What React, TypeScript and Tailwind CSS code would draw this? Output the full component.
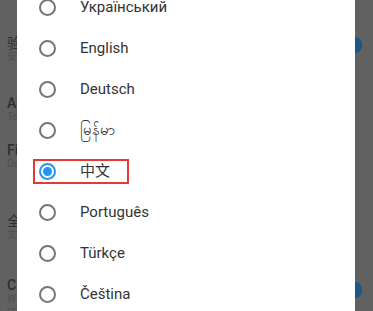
import React from "react";

const languages = [
  "Український",
  "English",
  "Deutsch",
  "မြန်မာ",
  "中文",
  "Português",
  "Türkçe",
  "Čeština",
];

function Radio({ checked }: { checked: boolean }) {
  return (
    <div
      className={`shrink-0 w-[17px] h-[17px] rounded-full border-2 flex items-center justify-center ${
        checked ? "border-[#2196f3]" : "border-[#757575]"
      }`}
    >
      {checked && <div className="w-[9px] h-[9px] rounded-full bg-[#2196f3]" />}
    </div>
  );
}

function BackdropText() {
  return (
    <div className="shrink-0 w-[17px] h-full overflow-hidden pl-[7px] text-[#2e2e2e] whitespace-nowrap">
      <div className="mt-[35px] text-[14px] leading-[16px]">验证</div>
      <div className="text-[10px] leading-[12px] text-[#505050]">安全</div>
      <div className="mt-[32px] text-[14px] leading-[16px] font-medium">App</div>
      <div className="text-[10px] leading-[12px] text-[#505050]">Text</div>
      <div className="mt-[19px] text-[14px] leading-[16px] font-medium">Fi</div>
      <div className="text-[10px] leading-[12px] text-[#505050]">De</div>
      <div className="mt-[43px] text-[14px] leading-[16px]">全部</div>
      <div className="text-[10px] leading-[12px] text-[#505050]">文字</div>
      <div className="mt-[36px] text-[14px] leading-[16px] font-medium">C</div>
      <div className="text-[10px] leading-[12px] text-[#505050]">W</div>
      <div className="text-[10px] leading-[11px] text-[#505050]">cc</div>
    </div>
  );
}

export default function App() {
  return (
    <div
      className="w-[373px] h-[311px] bg-[#616161] flex overflow-hidden"
      style={{ fontFamily: "Roboto, 'Noto Sans', 'Noto Sans CJK SC', sans-serif" }}
    >
      <BackdropText />
      <div className="shrink-0 w-[338px] h-full bg-white overflow-hidden">
        <div className="-mt-[13px] flex flex-col">
          {languages.map((lang, i) => (
            <div key={lang} className="h-[41px] flex items-center pl-[16px]">
              <div
                className={`flex items-center h-[25px] w-[96px] pl-[4px] border-2 whitespace-nowrap ${
                  i === 4 ? "border-[#e53935]" : "border-transparent"
                }`}
              >
                <Radio checked={i === 4} />
                <span className="ml-[24px] text-[15px] text-[#333]">{lang}</span>
              </div>
            </div>
          ))}
        </div>
      </div>
      <div className="flex-1 h-full flex flex-col">
        <div className="mt-[37px] w-[7px] h-[16px] rounded-r-full bg-[#17578a]" />
        <div className="mt-[229px] w-[7px] h-[16px] rounded-r-full bg-[#17578a]" />
      </div>
    </div>
  );
}
